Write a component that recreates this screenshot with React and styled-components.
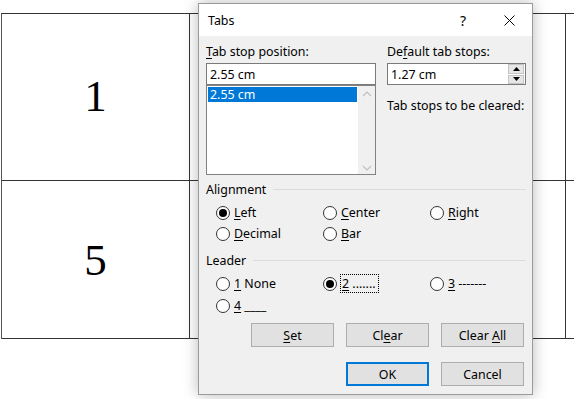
import styled, { createGlobalStyle } from "styled-components";

const Global = createGlobalStyle`
  html, body { margin: 0; padding: 0; background: #fff; }
  body { width: 574px; height: 399px; overflow: hidden; position: relative; }
`;

const Page = styled.div`
  position: relative;
  width: 574px;
  height: 399px;
  overflow: hidden;
  background: #fff;
`;

const Table = styled.div`
  display: grid;
  grid-template-columns: 188px 376px 40px;
  grid-template-rows: 167px 158px;
  margin: 13px 0 0 1px;
  width: 606px;
  border-top: 1px solid #333;
  border-left: 1px solid #555;
`;

const Cell = styled.div`
  border-right: 1px solid #333;
  border-bottom: 1px solid #333;
  display: flex;
  align-items: center;
  justify-content: center;
  font-family: "Liberation Serif", serif;
  font-size: 45px;
  color: #000;
  padding-bottom: ${(p) => p.$shift || 0}px;
`;

const Dialog = styled.div`
  position: absolute;
  left: 198px;
  top: 3px;
  width: 333px;
  height: 390px;
  border: 1px solid #9a9a9a;
  background: #f0f0f0;
  box-shadow: 0 0 14px rgba(0, 0, 0, 0.28);
  font-family: "Noto Sans", sans-serif;
  font-size: 12.4px;
  color: #000;
  display: flex;
  flex-direction: column;
`;

const TitleBar = styled.div`
  height: 32px;
  background: #fff;
  display: flex;
  align-items: center;
  padding-left: 9px;
`;

const Title = styled.span`
  flex: 1;
`;

const TitleBtn = styled.span`
  width: 46px;
  height: 32px;
  display: flex;
  align-items: center;
  justify-content: center;
  font-size: 14px;
`;

const Body = styled.div`
  padding: 8px 6px 0 7px;
  display: flex;
  flex-direction: column;
`;

const TopGrid = styled.div`
  display: grid;
  grid-template-columns: 170px 139px;
  column-gap: 11px;
`;

const Col = styled.div`
  display: flex;
  flex-direction: column;
`;

const Label = styled.div`
  height: 16px;
  line-height: 16px;
  margin-bottom: 3px;
  white-space: nowrap;
`;

const U = styled.span`
  text-decoration: underline;
  text-underline-offset: 2px;
`;

const Input = styled.div`
  height: 20px;
  border: 1px solid #7a7a7a;
  background: #fff;
  display: flex;
  align-items: center;
  padding-left: 3px;
  position: relative;
`;

const ListBox = styled.div`
  height: 88px;
  border: 1px solid #828282;
  background: #fff;
  display: flex;
`;

const ListItems = styled.div`
  flex: 1;
  padding: 1px 1px 0 1px;
`;

const ListItem = styled.div`
  height: 15px;
  line-height: 15px;
  padding-left: 2px;
  background: ${(p) => (p.$selected ? "#0078d7" : "transparent")};
  color: ${(p) => (p.$selected ? "#fff" : "#000")};
`;

const ScrollBar = styled.div`
  width: 17px;
  background: #f0f0f0;
  display: flex;
  flex-direction: column;
  justify-content: space-between;
  align-items: center;
  padding: 5px 0 3px;
`;

const Spinner = styled.div`
  position: absolute;
  right: 1px;
  top: 0;
  bottom: 0;
  width: 16px;
  display: flex;
  flex-direction: column;
  gap: 1px;
`;

const SpinBtn = styled.div`
  flex: 1;
  background: #e6e6e6;
  border: 1px solid #c4c4c4;
  display: flex;
  align-items: center;
  justify-content: center;
`;

const Note = styled.div`
  margin-top: 12px;
  white-space: nowrap;
`;

const Group = styled.div`
  margin-top: ${(p) => p.$top}px;
`;

const Legend = styled.div`
  display: flex;
  align-items: center;
  height: 16px;
  gap: 7px;
  &::after {
    content: "";
    flex: 1;
    height: 1px;
    background: #dcdcdc;
  }
`;

const RadioGrid = styled.div`
  display: grid;
  grid-template-columns: 107px 107px 100px;
  grid-auto-rows: 21px;
  row-gap: ${(p) => p.$gap || 0}px;
  padding-left: 10px;
  margin-top: ${(p) => p.$top}px;
`;

const Radio = styled.div`
  display: flex;
  align-items: center;
  gap: 4px;
  white-space: nowrap;
`;

const Circle = styled.span`
  width: 12px;
  height: 12px;
  border: 1px solid #333;
  border-radius: 50%;
  background: #fff;
  display: flex;
  align-items: center;
  justify-content: center;
  &::after {
    content: "";
    width: 8px;
    height: 8px;
    border-radius: 50%;
    background: ${(p) => (p.$on ? "#000" : "transparent")};
  }
`;

const Focus = styled.span`
  outline: 1px dotted #000;
  outline-offset: 0;
  padding: 0 2px 0 1px;
  line-height: 17px;
`;

const ButtonRow = styled.div`
  display: flex;
  justify-content: flex-end;
  gap: 12px;
  padding-right: 2px;
  margin-top: ${(p) => p.$top}px;
`;

const Button = styled.div`
  width: ${(p) => (p.$default ? 79 : 81)}px;
  height: ${(p) => (p.$default ? 20 : 22)}px;
  background: #e1e1e1;
  border: ${(p) => (p.$default ? "2px solid #0078d7" : "1px solid #adadad")};
  display: flex;
  align-items: center;
  justify-content: center;
`;

const Chevron = ({ up }) => (
  <svg width="10" height="6" viewBox="0 0 10 6">
    <path
      d={up ? "M1 5 L5 1 L9 5" : "M1 1 L5 5 L9 1"}
      fill="none"
      stroke="#c0c0c0"
      strokeWidth="1.2"
    />
  </svg>
);

const Tri = ({ up }) => (
  <svg width="7" height="4" viewBox="0 0 7 4">
    <path d={up ? "M0 4 L3.5 0 L7 4 Z" : "M0 0 L3.5 4 L7 0 Z"} fill="#000" />
  </svg>
);

const Close = () => (
  <svg width="11" height="11" viewBox="0 0 11 11">
    <path d="M0.5 0.5 L10.5 10.5 M10.5 0.5 L0.5 10.5" stroke="#000" strokeWidth="1" />
  </svg>
);

export default function App() {
  return (
    <Page>
      <Global />
      <Table>
        <Cell $shift={2}>1</Cell>
        <Cell />
        <Cell />
        <Cell $shift={0}>5</Cell>
        <Cell />
        <Cell />
      </Table>

      <Dialog>
        <TitleBar>
          <Title>Tabs</Title>
          <TitleBtn>?</TitleBtn>
          <TitleBtn>
            <Close />
          </TitleBtn>
        </TitleBar>
        <Body>
          <TopGrid>
            <Col>
              <Label>
                <U>T</U>ab stop position:
              </Label>
              <Input>2.55 cm</Input>
              <ListBox>
                <ListItems>
                  <ListItem $selected>2.55 cm</ListItem>
                </ListItems>
                <ScrollBar>
                  <Chevron up />
                  <Chevron />
                </ScrollBar>
              </ListBox>
            </Col>
            <Col>
              <Label>
                De<U>f</U>ault tab stops:
              </Label>
              <Input>
                1.27 cm
                <Spinner>
                  <SpinBtn>
                    <Tri up />
                  </SpinBtn>
                  <SpinBtn>
                    <Tri />
                  </SpinBtn>
                </Spinner>
              </Input>
              <Note>Tab stops to be cleared:</Note>
            </Col>
          </TopGrid>

          <Group $top={6}>
            <Legend>Alignment</Legend>
            <RadioGrid $top={5}>
              <Radio>
                <Circle $on />
                <span>
                  <U>L</U>eft
                </span>
              </Radio>
              <Radio>
                <Circle />
                <span>
                  <U>C</U>enter
                </span>
              </Radio>
              <Radio>
                <Circle />
                <span>
                  <U>R</U>ight
                </span>
              </Radio>
              <Radio>
                <Circle />
                <span>
                  <U>D</U>ecimal
                </span>
              </Radio>
              <Radio>
                <Circle />
                <span>
                  <U>B</U>ar
                </span>
              </Radio>
            </RadioGrid>
          </Group>

          <Group $top={8}>
            <Legend>Leader</Legend>
            <RadioGrid $top={5} $gap={1}>
              <Radio>
                <Circle />
                <span>
                  <U>1</U> None
                </span>
              </Radio>
              <Radio>
                <Circle $on />
                <Focus>
                  <U>2</U> .......
                </Focus>
              </Radio>
              <Radio>
                <Circle />
                <span>
                  <U>3</U> -------
                </span>
              </Radio>
              <Radio>
                <Circle />
                <span>
                  <U>4</U> ____
                </span>
              </Radio>
            </RadioGrid>
          </Group>

          <ButtonRow $top={7}>
            <Button>
              <span>
                <U>S</U>et
              </span>
            </Button>
            <Button>
              <span>
                Cl<U>e</U>ar
              </span>
            </Button>
            <Button>
              <span>
                Clear <U>A</U>ll
              </span>
            </Button>
          </ButtonRow>
          <ButtonRow $top={15}>
            <Button $default>OK</Button>
            <Button>Cancel</Button>
          </ButtonRow>
        </Body>
      </Dialog>
    </Page>
  );
}
